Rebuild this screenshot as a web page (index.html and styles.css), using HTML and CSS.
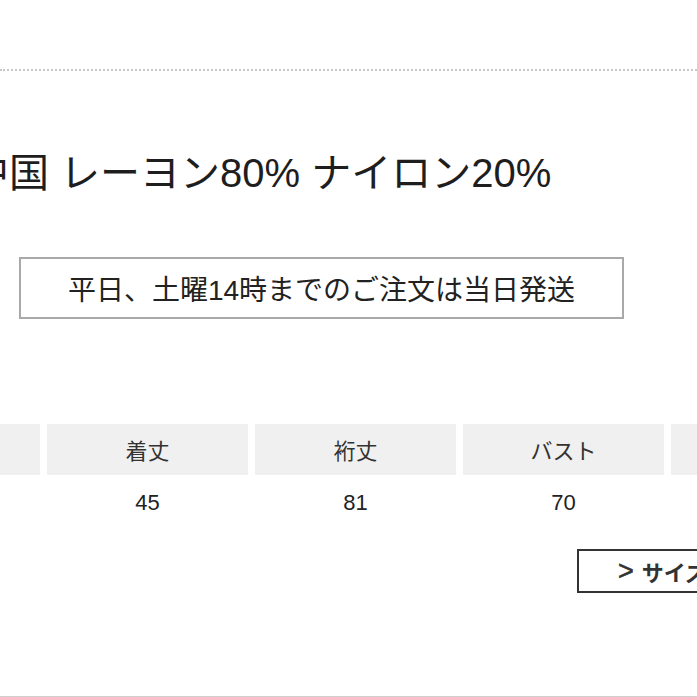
FILE: index.html
```html
<!DOCTYPE html>
<html lang="ja">
<head>
<meta charset="utf-8">
<title>商品詳細</title>
<link rel="stylesheet" href="styles.css">
</head>
<body>
<div class="page">
  <div class="dotted-rule"></div>
  <h1 class="material">中国 レーヨン80% ナイロン20%</h1>
  <div class="notice">平日、土曜14時までのご注文は当日発送</div>
  <div class="size-table">
    <div class="size-row size-head">
      <div class="cell">サイズ</div>
      <div class="cell">着丈</div>
      <div class="cell">裄丈</div>
      <div class="cell">バスト</div>
      <div class="cell">袖口</div>
    </div>
    <div class="size-row size-values">
      <div class="cell">F</div>
      <div class="cell">45</div>
      <div class="cell">81</div>
      <div class="cell">70</div>
      <div class="cell">14</div>
    </div>
  </div>
  <div class="link-row">
    <a class="size-link" href="#"><span class="chev">&gt;</span>サイズガイド</a>
  </div>
</div>
</body>
</html>
```
FILE: styles.css
```css
html, body {
  margin: 0;
  padding: 0;
  background: #fff;
}
body {
  font-family: "Liberation Sans", "Noto Sans CJK JP", sans-serif;
  color: #222;
  overflow: hidden;
}
.page {
  width: 697px;
  height: 696px;
  border-bottom: 1px solid #cfcfcf;
  overflow: hidden;
  display: flex;
  flex-direction: column;
}
.dotted-rule {
  margin-top: 69px;
  border-top: 2px dotted #c8c8c8;
  width: 100%;
}
.material {
  margin: 82px 0 0 -31px;
  font-size: 40px;
  line-height: 40px;
  font-weight: normal;
  white-space: nowrap;
  color: #1e1e1e;
}
.notice {
  margin: 64px 0 0 19px;
  width: 601px;
  height: 58px;
  border: 2px solid #a9a9a9;
  display: flex;
  align-items: center;
  justify-content: center;
  font-size: 28px;
  color: #222;
  white-space: nowrap;
}
.size-table {
  margin: 105px 0 0 -161px;
  display: flex;
  flex-direction: column;
}
.size-row {
  display: grid;
  grid-template-columns: repeat(5, 201px);
  column-gap: 7px;
}
.size-row .cell {
  display: flex;
  align-items: center;
  justify-content: center;
  white-space: nowrap;
}
.size-head .cell {
  height: 51px;
  background: #f0f0f0;
  font-size: 22px;
  color: #333;
  padding-bottom: 2px;
  box-sizing: border-box;
}
.size-values .cell {
  height: 55px;
  font-size: 22px;
  color: #222;
}
.link-row {
  margin: 19px 0 0 577px;
  display: flex;
}
.size-link {
  display: flex;
  align-items: center;
  height: 40px;
  width: 220px;
  flex-shrink: 0;
  padding-left: 39px;
  border: 2px solid #333;
  font-size: 22px;
  font-weight: bold;
  color: #333;
  text-decoration: none;
  white-space: nowrap;
}
.chev {
  font-weight: normal;
  font-size: 27px;
  line-height: 27px;
  margin-right: 8px;
  -webkit-text-stroke: 0.6px #333;
}
```
